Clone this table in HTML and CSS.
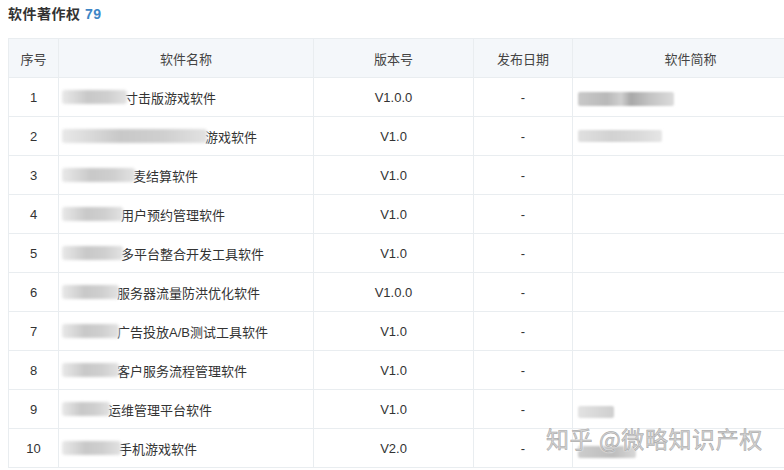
FILE: index.html
```html
<!DOCTYPE html>
<html lang="zh">
<head>
<meta charset="utf-8">
<link rel="stylesheet" href="styles.css">
</head>
<body>
<div class="page">
  <h2 class="title">软件著作权 <span class="count">79</span></h2>
  <table class="grid">
    <colgroup>
      <col class="c-no"><col class="c-name"><col class="c-ver"><col class="c-date"><col class="c-abbr">
    </colgroup>
    <thead>
      <tr><th>序号</th><th>软件名称</th><th>版本号</th><th>发布日期</th><th>软件简称</th></tr>
    </thead>
    <tbody>
      <tr><td>1</td><td class="name"><span class="mask m1"></span><span class="txt">寸击版游戏软件</span></td><td>V1.0.0</td><td>-</td><td class="abbr"><span class="amask a1"></span></td></tr>
      <tr><td>2</td><td class="name"><span class="mask m2"></span><span class="txt">游戏软件</span></td><td>V1.0</td><td>-</td><td class="abbr"><span class="amask a2"></span></td></tr>
      <tr><td>3</td><td class="name"><span class="mask m3"></span><span class="txt">麦结算软件</span></td><td>V1.0</td><td>-</td><td class="abbr"></td></tr>
      <tr><td>4</td><td class="name"><span class="mask m4"></span><span class="txt">用户预约管理软件</span></td><td>V1.0</td><td>-</td><td class="abbr"></td></tr>
      <tr><td>5</td><td class="name"><span class="mask m4"></span><span class="txt">多平台整合开发工具软件</span></td><td>V1.0</td><td>-</td><td class="abbr"></td></tr>
      <tr><td>6</td><td class="name"><span class="mask m6"></span><span class="txt">服务器流量防洪优化软件</span></td><td>V1.0.0</td><td>-</td><td class="abbr"></td></tr>
      <tr><td>7</td><td class="name"><span class="mask m6"></span><span class="txt">广告投放A/B测试工具软件</span></td><td>V1.0</td><td>-</td><td class="abbr"></td></tr>
      <tr><td>8</td><td class="name"><span class="mask m6"></span><span class="txt">客户服务流程管理软件</span></td><td>V1.0</td><td>-</td><td class="abbr"></td></tr>
      <tr><td>9</td><td class="name"><span class="mask m9"></span><span class="txt">运维管理平台软件</span></td><td>V1.0</td><td>-</td><td class="abbr"><span class="amask a9"></span></td></tr>
      <tr><td>10</td><td class="name"><span class="mask m10"></span><span class="txt">手机游戏软件</span></td><td>V2.0</td><td>-</td><td class="abbr"><span class="amask a10"></span></td></tr>
    </tbody>
  </table>
  <div class="watermark">知乎 @微略知识产权</div>
</div>
</body>
</html>
```

FILE: styles.css
```css
html, body {
  margin: 0;
  padding: 0;
  background: #fff;
  overflow: hidden;
}
body {
  width: 784px;
  height: 470px;
  font-family: "Liberation Sans", "Noto Sans CJK SC", sans-serif;
  color: #333;
}
.page {
  position: relative;
  padding: 5px 0 0 8px;
}
.title {
  margin: 0;
  height: 33px;
  font-size: 14px;
  line-height: 18px;
  font-weight: bold;
  color: #333;
  letter-spacing: 0.5px;
}
.count {
  color: #3d86c6;
}
.grid {
  border-collapse: collapse;
  table-layout: fixed;
  width: 800px;
  font-size: 13px;
}
.c-no { width: 50px; }
.c-name { width: 255px; }
.c-ver { width: 160px; }
.c-date { width: 99px; }
.c-abbr { width: 236px; }
.grid th {
  height: 38px;
  background: #f4f7fa;
  font-weight: normal;
  color: #444;
  border: 1px solid #e9edf0;
  padding: 0;
}
.grid td {
  height: 38px;
  text-align: center;
  border: 1px solid #e9edf0;
  padding: 0;
}
.grid td.name {
  text-align: left;
  padding-left: 3px;
  white-space: nowrap;
  overflow: hidden;
}
.name .mask, .name .txt {
  display: inline-block;
  vertical-align: middle;
}
.mask {
  height: 14px;
  border-radius: 3px;
  background: linear-gradient(90deg, #e8e8e8 0%, #d9d9d9 20%, #c8c8c8 40%, #cfcfcf 70%, #e2e2e2 100%);
  filter: blur(1.5px);
  margin-right: -2px;
}
.m1 { width: 65px; }
.m2 { width: 145px; }
.m3 { width: 73px; }
.m4 { width: 61px; }
.m6 { width: 57px; }
.m9 { width: 48px; }
.m10 { width: 59px; }
.grid td.abbr {
  text-align: left;
  padding-left: 5px;
}
.amask {
  display: block;
  border-radius: 2px;
  filter: blur(1px);
}
.a1 {
  width: 96px;
  height: 14px;
  margin-top: 4px;
  background: linear-gradient(90deg, #c9c9c9, #b9b9b9 30%, #d0d0d0 45%, #a8a8a8 55%, #c4c4c4 75%, #dcdcdc);
}
.a2 {
  width: 84px;
  height: 12px;
  background: linear-gradient(90deg, #e0e0e0, #d2d2d2 40%, #d9d9d9 70%, #e6e6e6);
}
.a9 {
  width: 36px;
  height: 12px;
  margin-top: 6px;
  background: linear-gradient(90deg, #e2e2e2, #cfcfcf);
}
.a10 {
  width: 58px;
  height: 12px;
  margin-top: 8px;
  background: linear-gradient(90deg, #cdcdcd, #bdbdbd 60%, #d8d8d8);
}
.watermark {
  position: absolute;
  left: 546px;
  top: 421px;
  font-family: "Noto Sans CJK SC", sans-serif;
  font-size: 23px;
  letter-spacing: 0.6px;
  color: #d4d4d4;
  -webkit-text-stroke: 0.5px #a0a0a0;
  text-shadow: 0 0 2px #fff, 0 0 2px #fff;
}
```
